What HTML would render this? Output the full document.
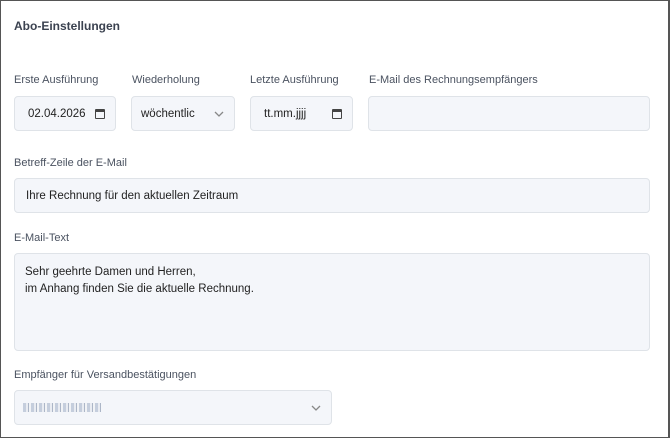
<!DOCTYPE html>
<html><head><style>
*{box-sizing:border-box;margin:0;padding:0}
body{width:670px;height:439px;background:#fff;font-family:"Liberation Sans",sans-serif;position:relative;overflow:hidden}
.frame{position:absolute;left:0;top:0;width:670px;height:438px;border:1px solid #555;border-right-width:2px}
.t{position:absolute;font-size:11px;color:#4a5260}
.h{position:absolute;left:14px;top:19px;font-size:12px;font-weight:bold;color:#3b4250}
.in{position:absolute;background:#f4f6fa;border:1px solid #dfe3e8;border-radius:4px;font-size:11.5px;color:#222;display:flex;align-items:center}
.chev{position:absolute;right:10px;top:13px}
.cal{position:absolute;right:10px;top:12px;width:10px;height:10px;border:1.5px solid #444;border-top-width:3px;border-radius:1px}
</style></head><body>
<div class="frame"></div>
<div class="h">Abo-Einstellungen</div>
<div class="t" style="left:14px;top:74px">Erste Ausführung</div>
<div class="t" style="left:132px;top:74px">Wiederholung</div>
<div class="t" style="left:250px;top:74px">Letzte Ausführung</div>
<div class="t" style="left:369px;top:74px">E-Mail des Rechnungsempfängers</div>
<div class="in" style="left:14px;top:96px;width:102px;height:35px;padding-left:13px">02.04.2026<span class="cal"></span></div>
<div class="in" style="left:131px;top:96px;width:104px;height:35px;padding-left:9px">wöchentlic<svg class="chev" width="10" height="8" viewBox="0 0 10 8"><path d="M1 2l4 4 4-4" fill="none" stroke="#888" stroke-width="1.3"/></svg></div>
<div class="in" style="left:250px;top:96px;width:103px;height:35px;padding-left:13px">tt.mm.jjjj<span class="cal"></span></div>
<div class="in" style="left:368px;top:96px;width:282px;height:35px"></div>
<div class="t" style="left:14px;top:157px">Betreff-Zeile der E-Mail</div>
<div class="in" style="left:14px;top:178px;width:636px;height:35px;padding-left:11px">Ihre Rechnung für den aktuellen Zeitraum</div>
<div class="t" style="left:14px;top:232px">E-Mail-Text</div>
<div class="in" style="left:14px;top:253px;width:636px;height:98px;padding:10px;align-items:flex-start;line-height:17px">Sehr geehrte Damen und Herren,<br>im Anhang finden Sie die aktuelle Rechnung.</div>
<div class="t" style="left:14px;top:369px">Empfänger für Versandbestätigungen</div>
<div class="in" style="left:14px;top:390px;width:318px;height:35px;padding-left:8px"><span style="display:inline-block;width:78px;height:9px;background:repeating-linear-gradient(90deg,#b9c4d6 0 3px,#e6eaf0 3px 5px,#9aa6ba 5px 6px,#f0f2f5 6px 8px);opacity:.8"></span><svg class="chev" width="10" height="8" viewBox="0 0 10 8"><path d="M1 2l4 4 4-4" fill="none" stroke="#888" stroke-width="1.3"/></svg></div>
</body></html>
